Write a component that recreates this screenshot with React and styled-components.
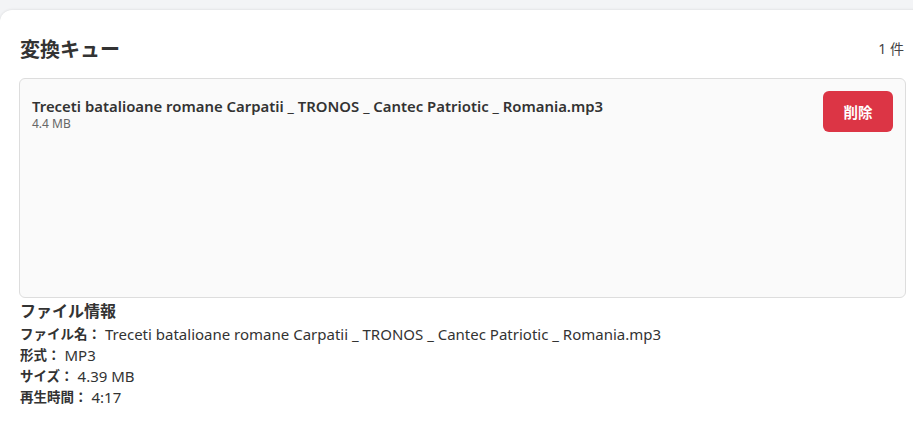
import styled, { createGlobalStyle } from "styled-components";

const GlobalStyle = createGlobalStyle`
  html, body {
    margin: 0;
    padding: 0;
    overflow: hidden;
    background: #f3f4f6;
    font-family: "Noto Sans", "Noto Sans CJK JP", sans-serif;
    color: #333;
  }
`;

const queue = [
  {
    name: "Treceti batalioane romane Carpatii _ TRONOS _ Cantec Patriotic _ Romania.mp3",
    size: "4.4 MB",
  },
];

const info = [
  { label: "ファイル名：", value: queue[0].name },
  { label: "形式：", value: "MP3" },
  { label: "サイズ：", value: "4.39 MB" },
  { label: "再生時間：", value: "4:17" },
];

const App = () => {
  return (
    <>
      <GlobalStyle />
      <Card>
        <Header>
          <Title>変換キュー</Title>
          <Count>{queue.length} 件</Count>
        </Header>

        <QueueList>
          {queue.map((item) => (
            <QueueItem key={item.name}>
              <ItemInfo>
                <ItemName>{item.name}</ItemName>
                <ItemSize>{item.size}</ItemSize>
              </ItemInfo>
              <DeleteButton>削除</DeleteButton>
            </QueueItem>
          ))}
        </QueueList>

        <InfoTitle>ファイル情報</InfoTitle>
        {info.map((row) => (
          <InfoRow key={row.label}>
            <InfoLabel>{row.label}</InfoLabel> {row.value}
          </InfoRow>
        ))}
      </Card>
    </>
  );
};

export default App;

const Card = styled.div`
  box-sizing: border-box;
  width: 926px;
  min-height: 420px;
  margin-top: 10px;
  padding: 20px 20px 20px 19px;
  background: #fff;
  border-radius: 12px 0 0 0;
  box-shadow: 0 0 3px rgba(0, 0, 0, 0.12);
`;

const Header = styled.div`
  display: flex;
  justify-content: space-between;
  align-items: center;
  height: 36px;
  margin-bottom: 12px;
`;

const Title = styled.h2`
  margin: 0 0 0 1px;
  font-size: 20px;
  font-weight: 700;
  color: #333;
`;

const Count = styled.span`
  font-size: 14px;
  color: #444;
  padding-right: 2px;
`;

const QueueList = styled.div`
  box-sizing: border-box;
  height: 220px;
  padding: 12px;
  background: #fafafa;
  border: 1px solid #ddd;
  border-radius: 6px;
`;

const QueueItem = styled.div`
  display: flex;
  justify-content: space-between;
  align-items: flex-start;
`;

const ItemInfo = styled.div`
  display: flex;
  flex-direction: column;
  padding-top: 5px;
`;

const ItemName = styled.span`
  font-size: 14.9px;
  font-weight: 600;
  color: #333;
  line-height: 20px;
`;

const ItemSize = styled.span`
  font-size: 12px;
  color: #666;
  line-height: 16px;
`;

const DeleteButton = styled.button`
  width: 70px;
  height: 41px;
  border: none;
  border-radius: 6px;
  background: #dc3545;
  color: #fff;
  font-family: "Noto Sans CJK JP", sans-serif;
  font-size: 14.5px;
  font-weight: 700;
`;

const InfoTitle = styled.h3`
  margin: 0 0 0 1px;
  font-size: 16px;
  font-weight: 700;
  line-height: 26px;
  color: #333;
`;

const InfoRow = styled.div`
  display: flex;
  align-items: center;
  gap: 4px;
  height: 21px;
  margin-left: 1px;
  font-size: 15px;
  line-height: 21px;
  color: #333;
  white-space: pre;
`;

const InfoLabel = styled.strong`
  font-size: 13.5px;
  font-weight: 700;
`;
